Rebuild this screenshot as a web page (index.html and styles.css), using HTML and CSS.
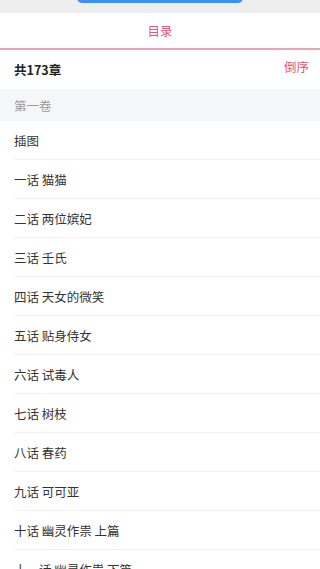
FILE: index.html
```html
<!DOCTYPE html>
<html lang="zh">
<head>
<meta charset="utf-8">
<link rel="stylesheet" href="styles.css">
</head>
<body>
<div class="status"><div class="pill"></div></div>
<div class="header">目录</div>
<div class="summary">
  <span class="count">共173章</span>
  <span class="order">倒序</span>
</div>
<div class="volume">第一卷</div>
<ul class="list">
  <li class="item">插图</li>
  <li class="item">一话 猫猫</li>
  <li class="item">二话 两位嫔妃</li>
  <li class="item">三话 壬氏</li>
  <li class="item">四话 天女的微笑</li>
  <li class="item">五话 贴身侍女</li>
  <li class="item">六话 试毒人</li>
  <li class="item">七话 树枝</li>
  <li class="item">八话 春药</li>
  <li class="item">九话 可可亚</li>
  <li class="item">十话 幽灵作祟 上篇</li>
  <li class="item">十一话 幽灵作祟 下篇</li>
</ul>
</body>
</html>
```
FILE: styles.css
```css
html, body {
  margin: 0;
  padding: 0;
  background: #ffffff;
  font-family: "Noto Sans CJK SC", "Noto Sans", sans-serif;
  overflow: hidden;
}
.status {
  height: 13px;
  background: #eeeeee;
  display: flex;
  justify-content: center;
  overflow: hidden;
}
.pill {
  width: 166px;
  height: 10px;
  margin-top: -7px;
  border-radius: 6px;
  background: #3b8ff5;
}
.header {
  height: 35px;
  display: flex;
  align-items: center;
  justify-content: center;
  font-size: 12.5px;
  color: #e2587a;
  border-bottom: 2px solid #e9a3b3;
}
.summary {
  height: 39px;
  padding: 0 11px 0 14px;
  display: flex;
  justify-content: space-between;
  align-items: center;
}
.count {
  font-size: 12.5px;
  font-weight: bold;
  color: #222222;
}
.order {
  font-size: 12.5px;
  color: #e2587a;
  margin-bottom: 7px;
}
.volume {
  height: 32px;
  padding-left: 14px;
  display: flex;
  align-items: center;
  background: #f5f6f8;
  font-size: 12.5px;
  color: #9a9a9a;
}
.list {
  list-style: none;
  margin: 0;
  padding: 0;
}
.item {
  margin-left: 14px;
  height: 38px;
  display: flex;
  align-items: center;
  border-bottom: 1px solid #f1f1f1;
  font-size: 12.5px;
  color: #333333;
}
```
